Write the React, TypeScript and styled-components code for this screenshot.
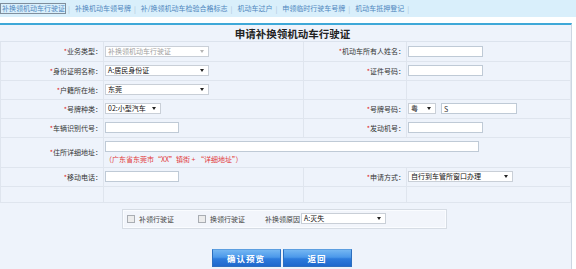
import React from "react";
import styled, { createGlobalStyle } from "styled-components";

const GlobalStyle = createGlobalStyle`
	body {
		margin: 0;
		background: #ffffff;
		font-family: "Noto Sans CJK SC", "Liberation Sans", sans-serif;
	}
`;

const Page = styled.div`
	width: 576px;
	height: 269px;
	overflow: hidden;
`;

const TabBar = styled.div`
	height: 17px;
	background: #d9effb;
	display: flex;
	align-items: center;
	font-size: 7px;
	color: #4f86bd;
`;

const Tab = styled.span<{ $active?: boolean }>`
	line-height: 9px;
	padding: 0 0 0 1px;
	border: 1px solid ${(p) => (p.$active ? "#7f8e9c" : "transparent")};
	white-space: nowrap;
`;

const Sep = styled.span`
	color: #a9c2d6;
	margin: 0 3px 0 2px;
`;

const Panel = styled.div`
	margin-top: 6px;
	width: 571px;
	height: 246px;
	background: #eef3fb;
	border-top: 2px solid #3ea8d8;
	border-right: 1px solid #cdd6e2;
`;

const Title = styled.div`
	height: 16px;
	line-height: 17px;
	padding-left: 14px;
	text-align: center;
	font-size: 10.5px;
	font-weight: bold;
	color: #222;
	border-bottom: 1px solid #dce3ed;
`;

const FormTable = styled.table`
	width: 571px;
	border-collapse: collapse;
	table-layout: fixed;
`;

const Row = styled.tr<{ $h?: number }>`
	height: ${(p) => p.$h ?? 19}px;
`;

const LabelCell = styled.td`
	text-align: right;
	font-size: 7px;
	color: #333;
	padding: 0 1px 0 0;
	border: 1px solid #dfe5ee;
	border-top: none;
	white-space: nowrap;
`;

const FieldCell = styled.td`
	padding: 0 0 0 1px;
	border: 1px solid #dfe5ee;
	border-top: none;
	vertical-align: middle;
`;

const Star = styled.span`
	color: #e02020;
`;

const Input = styled.input<{ $w: number }>`
	display: block;
	box-sizing: border-box;
	width: ${(p) => p.$w}px;
	height: 11px;
	margin: 0;
	padding: 0 2px;
	border: 1px solid #bfcad6;
	background: #fff;
	font-size: 7px;
	font-family: inherit;
	color: #333;
`;

const SelectBox = styled.div<{ $w: number; $disabled?: boolean }>`
	box-sizing: border-box;
	width: ${(p) => p.$w}px;
	height: 11px;
	display: flex;
	align-items: center;
	justify-content: space-between;
	padding: 0 4px 0 2px;
	border: 1px solid #c9cfd7;
	background: #fff;
	font-size: 7px;
	line-height: 9px;
	color: ${(p) => (p.$disabled ? "#a0a0a0" : "#111")};
	white-space: nowrap;
`;

const Arrow = styled.span<{ $disabled?: boolean }>`
	width: 0;
	height: 0;
	border-left: 2px solid transparent;
	border-right: 2px solid transparent;
	border-top: 3px solid ${(p) => (p.$disabled ? "#b5b5b5" : "#222")};
`;

const Inline = styled.div`
	display: flex;
	align-items: center;
	gap: 5px;
`;

const Hint = styled.div`
	margin-top: 3px;
	font-size: 7px;
	line-height: 9px;
	color: #e23a3a;
	white-space: nowrap;
`;

const OptionBox = styled.div`
	margin: 6px 0 0 122px;
	width: 325px;
	height: 20px;
	box-sizing: border-box;
	display: flex;
	align-items: center;
	padding-left: 4px;
	border: 1px solid #d6dce4;
	box-shadow: inset 0 0 0 1px #fafcff;
	background: #f2f5fb;
	font-size: 7px;
	color: #444;
`;

const Check = styled.span`
	width: 6px;
	height: 6px;
	border: 1px solid #a9adb3;
	background: #ececec;
	margin-right: 4px;
`;

const OptionLabel = styled.span<{ $gap: number }>`
	margin-right: ${(p) => p.$gap}px;
	white-space: nowrap;
`;

const ButtonRow = styled.div`
	margin-top: 20px;
	display: flex;
	justify-content: center;
	gap: 2px;
	padding-right: 8px;
`;

const Button = styled.button`
	width: 69px;
	height: 18px;
	padding: 0;
	border: 1px solid #2c6fbf;
	border-top-color: #5c9ee0;
	background: linear-gradient(#74b6f2 0%, #4b98ea 45%, #2d7bdc 55%, #1f68cc 100%);
	color: #fff;
	font-family: inherit;
	font-size: 8.5px;
	font-weight: bold;
	letter-spacing: 1px;
`;

const Label = ({ text }: { text: string }) => (
	<LabelCell>
		<Star>*</Star>
		{text}：
	</LabelCell>
);

const Select = ({ w, value, disabled }: { w: number; value: string; disabled?: boolean }) => (
	<SelectBox $w={w} $disabled={disabled}>
		<span>{value}</span>
		<Arrow $disabled={disabled} />
	</SelectBox>
);

const tabs = [
	"补换领机动车行驶证",
	"补换机动车领号牌",
	"补/换领机动车检验合格标志",
	"机动车过户",
	"申领临时行驶车号牌",
	"机动车抵押登记",
];

const App = () => {
	return (
		<Page>
			<GlobalStyle />
			<TabBar>
				{tabs.map((t, i) => (
					<React.Fragment key={t}>
						<Tab $active={i === 0}>{t}</Tab>
						<Sep>|</Sep>
					</React.Fragment>
				))}
			</TabBar>
			<Panel>
				<Title>申请补换领机动车行驶证</Title>
				<FormTable>
					<colgroup>
						<col style={{ width: 103 }} />
						<col style={{ width: 200 }} />
						<col style={{ width: 103 }} />
						<col />
					</colgroup>
					<tbody>
						<Row>
							<Label text="业务类型" />
							<FieldCell>
								<Select w={104} value="补换领机动车行驶证" disabled />
							</FieldCell>
							<Label text="机动车所有人姓名" />
							<FieldCell>
								<Input $w={75} />
							</FieldCell>
						</Row>
						<Row>
							<Label text="身份证明名称" />
							<FieldCell>
								<Select w={104} value="A:居民身份证" />
							</FieldCell>
							<Label text="证件号码" />
							<FieldCell>
								<Input $w={75} />
							</FieldCell>
						</Row>
						<Row>
							<Label text="户籍所在地" />
							<FieldCell>
								<Select w={104} value="东莞" />
							</FieldCell>
							<LabelCell />
							<FieldCell />
						</Row>
						<Row>
							<Label text="号牌种类" />
							<FieldCell>
								<Select w={56} value="02:小型汽车" />
							</FieldCell>
							<Label text="号牌号码" />
							<FieldCell>
								<Inline>
									<Select w={28} value="粤" />
									<Input $w={76} defaultValue="S" />
								</Inline>
							</FieldCell>
						</Row>
						<Row>
							<Label text="车辆识别代号" />
							<FieldCell>
								<Input $w={74} />
							</FieldCell>
							<Label text="发动机号" />
							<FieldCell>
								<Input $w={75} />
							</FieldCell>
						</Row>
						<Row $h={30}>
							<Label text="住所详细地址" />
							<FieldCell colSpan={3}>
								<Input $w={374} />
								<Hint>（广东省东莞市“XX”镇街 + “详细地址”）</Hint>
							</FieldCell>
						</Row>
						<Row>
							<Label text="移动电话" />
							<FieldCell>
								<Input $w={74} />
							</FieldCell>
							<Label text="申请方式" />
							<FieldCell>
								<Select w={105} value="自行到车管所窗口办理" />
							</FieldCell>
						</Row>
						<Row $h={16}>
							<LabelCell />
							<FieldCell />
							<LabelCell />
							<FieldCell />
						</Row>
					</tbody>
				</FormTable>
				<OptionBox>
					<Check />
					<OptionLabel $gap={24}>补领行驶证</OptionLabel>
					<Check />
					<OptionLabel $gap={20}>换领行驶证</OptionLabel>
					<OptionLabel $gap={1}>补换领原因</OptionLabel>
					<Select w={85} value="A:灭失" />
				</OptionBox>
				<ButtonRow>
					<Button>确认预览</Button>
					<Button>返回</Button>
				</ButtonRow>
			</Panel>
		</Page>
	);
};

export default App;
